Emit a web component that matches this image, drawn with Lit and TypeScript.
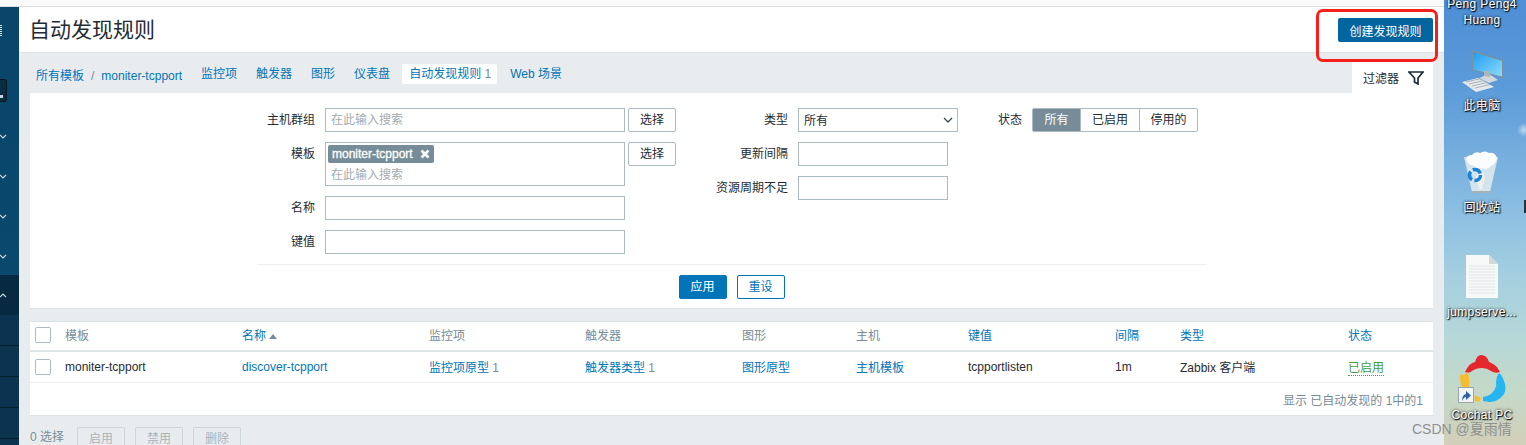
import { LitElement, css, html, svg } from 'lit';
import { customElement } from 'lit/decorators.js';

const columns = [
  { title: '模板', sort: false },
  { title: '名称', sort: true },
  { title: '监控项', sort: false },
  { title: '触发器', sort: false },
  { title: '图形', sort: false },
  { title: '主机', sort: false },
  { title: '键值', sort: true },
  { title: '间隔', sort: true },
  { title: '类型', sort: true },
  { title: '状态', sort: true },
];

const sideLines = [0, 1, 2, 3];

const chevron = (up = false) => html`<svg class="chev ${up ? 'up' : 'down'}" width="8" height="6" viewBox="0 0 8 6">
  <path d=${up ? 'M1 5l3-3 3 3' : 'M1 1l3 3 3-3'} fill="none" stroke="#c4d4de" stroke-width="1.2" />
</svg>`;

const monitorIcon = svg`<svg width="44" height="44" viewBox="0 0 44 44">
  <defs>
    <linearGradient id="scr" x1="0" y1="0" x2="1" y2="1">
      <stop offset="0" stop-color="#1e9df0" />
      <stop offset="1" stop-color="#8ddafc" />
    </linearGradient>
  </defs>
  <path d="M10 0l31 10v18L10 20z" fill="#7f909c" />
  <path d="M11 2l29 9v15.500L11 19.500z" fill="url(#scr)" />
  <path d="M17 28l10-4 9 6-9 3z" fill="#d3d8db" />
  <path d="M22 21h6v6l-6-1z" fill="#aeb7bc" />
  <path d="M0 32l16-4 16 9-18 5z" fill="#e6e9eb" />
  <path d="M4 32l15-3.500M7 34l15-3.500M10 36l15-3.500M13 38l15-3.500" stroke="#aab3b9" stroke-width="1" />
</svg>`;

const binIcon = svg`<svg width="36" height="44" viewBox="0 0 36 44">
  <path d="M1 7h34l-8 35H9z" fill="#e4ebef" fill-opacity=".85" />
  <path d="M8 41l1 2h18l1-2z" fill="#a9b0b4" />
  <path d="M3 9q1-4 6-4 3-4 8-2 5-3 9 0 6-1 8 5-2 7-6 8-4 5-9 2-5 3-8-2-6 0-8-7z" fill="#fbfcfc" />
  <path d="M17 16l5 11-3 12h-3l-3-12z" fill="#f3f6f7" fill-opacity=".7" />
  <circle cx="12" cy="25" r="5.500" fill="none" stroke="#1b83d6" stroke-width="3.500" stroke-dasharray="9 2.500" />
</svg>`;

const docIcon = svg`<svg width="32" height="43" viewBox="0 0 32 43">
  <path d="M0 0h23l9 9v34H0z" fill="#f7f8f8" />
  <path d="M23 0v9h9z" fill="#d5d8da" />
  <path d="M3 11h26M3 14h26M3 17h26M3 20h26M3 23h26M3 26h26M3 29h26M3 32h26M3 35h26M3 38h26" stroke="#e2e4e6" stroke-width="1" />
</svg>`;

const cochatIcon = svg`<svg width="48" height="50" viewBox="0 0 48 50">
  <path d="M5 18Q9 9 15 8 17 1 21 1 27 1 29 8 36 10 40 18 35 20 31 17 27 14 22 14 16 14 12 17 9 20 5 18Z" fill="#e5262b" />
  <path d="M.5 20Q4 22 7.500 18 10 24 9 34L3 36Q-1 28 .5 20Z" fill="#f5bc2d" />
  <path d="M14.300 41L21 44 19 48 15 47Z" fill="#f5bc2d" />
  <path d="M39 19Q42 21 44 27 47 34 44 40 38 48 30 48L23 47 23 43Q30 42 33 38 37 33 36 28 36 23 39 19Z" fill="#25b5f0" />
</svg>`;

@customElement('app-root')
export class AppRoot extends LitElement {
  static styles = css`
    :host {
      display: block;
      width: 1526px;
      height: 445px;
      position: relative;
      overflow: hidden;
      font-family: 'Liberation Sans', 'Noto Sans CJK SC', sans-serif;
      font-size: 12px;
      color: #1f2c33;
      background: #e9ecef;
    }
    a {
      color: #0275b8;
      text-decoration: none;
    }
    .screen {
      display: flex;
      height: 445px;
    }
    .window {
      width: 1444px;
      display: flex;
      flex-direction: column;
      flex: none;
    }
    .strip {
      height: 6px;
      background: #fafafa;
      border-bottom: 1px solid #dcdfe2;
      flex: none;
    }
    .body {
      display: flex;
      flex: 1;
      min-height: 0;
    }
    .sidebar {
      width: 19px;
      flex: none;
      display: flex;
      flex-direction: column;
      background: linear-gradient(#0a456a, #0a4a70);
      overflow: hidden;
    }
    .side-dots {
      height: 11px;
      width: 2px;
      margin-top: 18px;
      background: repeating-linear-gradient(#d8e2e8 0 1px, transparent 1px 2px);
    }
    .side-search {
      width: 7px;
      height: 23px;
      margin-top: 43px;
      padding-top: 15px;
      background: #0a2c42;
      border: 1px solid #05141e;
      border-left: 0;
      border-radius: 0 3px 3px 0;
      box-sizing: border-box;
    }
    .side-search i {
      display: block;
      width: 3px;
      height: 3px;
      background: #c9d6dd;
    }
    .side-item {
      height: 40px;
      display: flex;
      align-items: center;
    }
    .side-gap {
      height: 13px;
    }
    .side-item.open {
      background: #072a40;
    }
    .chev {
      margin-left: -1px;
    }
    .chev.down {
      margin-top: 3px;
    }
    .side-sub {
      flex: 1;
      background: #0c3350;
      display: flex;
      flex-direction: column;
    }
    .side-sub div {
      height: 30px;
      flex: none;
      border-bottom: 1px solid #05202f;
    }
    .main {
      flex: 1;
      min-width: 0;
      display: flex;
      flex-direction: column;
    }
    .header {
      height: 45px;
      flex: none;
      background: #fff;
      border-bottom: 1px solid #dde2e5;
      display: flex;
      align-items: center;
      justify-content: space-between;
      padding: 0 11px 0 10px;
    }
    .header h1 {
      margin: 0;
      font-size: 21px;
      font-weight: 400;
      line-height: 30px;
    }
    .btn-create {
      height: 24px;
      width: 95px;
      margin-top: 1px;
      border-radius: 2px;
      background: #03659f;
      color: #fff;
      display: flex;
      align-items: center;
      justify-content: center;
    }
    .content {
      padding: 0 11px;
      display: flex;
      flex-direction: column;
    }
    .nav {
      height: 40px;
      display: flex;
      align-items: flex-end;
    }
    .tabs {
      display: flex;
      align-items: center;
      height: 20px;
      margin-bottom: 9px;
      padding-left: 6px;
    }
    .crumb {
      margin-right: 12px;
      color: #768d99;
    }
    .crumb a + span {
      margin: 0 7px;
    }
    .tab {
      padding: 0 7px;
      margin-right: 5px;
      line-height: 20px;
    }
    .tab.active {
      background: #fff;
      border-radius: 2px;
      padding-right: 6px;
      margin-right: 6px;
    }
    .tab.active span,
    .count {
      color: #768d99;
    }
    .filter-tab {
      margin-left: auto;
      width: 81px;
      height: 31px;
      background: #fff;
      display: flex;
      align-items: center;
      justify-content: flex-end;
      gap: 9px;
      padding-right: 9px;
      box-sizing: border-box;
    }
    .filter {
      background: #fff;
      height: 216px;
      box-sizing: border-box;
      border-bottom: 1px solid #dde2e5;
      padding-top: 15px;
    }
    .columns {
      display: flex;
      height: 146px;
    }
    .col-a {
      width: 646px;
      flex: none;
      display: grid;
      grid-template-columns: 285px 300px 48px;
      column-gap: 10px;
      row-gap: 10px;
      grid-auto-rows: min-content;
    }
    .col-a > .pick {
      margin-left: -7px;
    }
    .col-b {
      width: 282px;
      flex: none;
      display: grid;
      grid-template-columns: 112px 160px;
      column-gap: 10px;
      row-gap: 10px;
      grid-auto-rows: min-content;
    }
    .col-c {
      flex: none;
      display: flex;
      gap: 10px;
    }
    .label {
      text-align: right;
      line-height: 24px;
      height: 24px;
    }
    .col-c .label {
      width: 64px;
    }
    .input {
      height: 24px;
      box-sizing: border-box;
      border: 1px solid #acbbc2;
      background: #fff;
      padding: 0 5px;
      line-height: 22px;
    }
    .short {
      width: 150px;
    }
    .ph {
      color: #a3abb0;
    }
    .multi {
      height: 44px;
      padding: 2px 2px 0;
      line-height: 14px;
    }
    .multi .ph {
      display: block;
      padding: 5px 3px 0;
    }
    .tag {
      display: inline-flex;
      align-items: center;
      gap: 7px;
      height: 18px;
      padding: 0 4px;
      background: #768d99;
      border-radius: 2px;
      color: #fff;
      -webkit-text-stroke: 0.3px #fff;
    }
    .pick {
      height: 24px;
      width: 48px;
      box-sizing: border-box;
      border: 1px solid #acbbc2;
      border-radius: 2px;
      background: #fff;
      text-align: center;
      line-height: 22px;
    }
    .select {
      display: flex;
      align-items: center;
      justify-content: space-between;
      padding-right: 4px;
      padding-top: 1px;
    }
    .seg {
      display: flex;
      height: 24px;
      box-sizing: border-box;
      border: 1px solid #acbbc2;
      border-radius: 2px;
      background: #fff;
      line-height: 22px;
      text-align: center;
    }
    .seg span {
      width: 58px;
      border-left: 1px solid #acbbc2;
    }
    .seg span:first-child {
      width: 47px;
      border-left: 0;
      background: #768d99;
      color: #fff;
    }
    .seg span:last-child {
      width: 57px;
    }
    .divider {
      height: 1px;
      width: 950px;
      margin: 10px 0 0 227px;
      background: #ebeef0;
    }
    .actions {
      display: flex;
      justify-content: center;
      gap: 10px;
      margin-top: 10px;
    }
    .actions span {
      width: 48px;
      height: 24px;
      box-sizing: border-box;
      border: 1px solid #0275b8;
      border-radius: 2px;
      text-align: center;
      line-height: 22px;
      color: #0275b8;
    }
    .actions .primary {
      background: #0275b8;
      color: #fff;
    }
    .list {
      margin-top: 12px;
      background: #fff;
      height: 95px;
      box-sizing: border-box;
      border-bottom: 1px solid #dde2e5;
      border-top: 1px solid #dde2e5;
    }
    .row {
      display: grid;
      grid-template-columns: 35px 177px 187px 156px 157px 114px 112px 147px 65px 168px 85px;
      align-items: center;
    }
    .row.head {
      height: 25px;
      padding-bottom: 3px;
      border-bottom: 2px solid #dde2e5;
      color: #768d99;
    }
    .row.item {
      height: 29px;
      padding-bottom: 1px;
      border-bottom: 1px solid #ebeef0;
    }
    .check {
      width: 16px;
      height: 16px;
      margin-left: 5px;
      box-sizing: border-box;
      border: 1px solid #acbbc2;
      border-radius: 2px;
      background: #fff;
    }
    .sort-arrow {
      display: inline-block;
      margin-left: 3px;
      vertical-align: 1px;
      border-left: 4px solid transparent;
      border-right: 4px solid transparent;
      border-bottom: 5px solid #768d99;
    }
    .status {
      color: #429e47;
      border-bottom: 1px dotted #429e47;
    }
    .paging {
      text-align: right;
      color: #768d99;
      padding: 8px 10px 0 0;
    }
    .paging a {
      color: #768d99;
    }
    .bulk {
      display: flex;
      margin-top: 11px;
      color: #768d99;
    }
    .bulk b {
      font-weight: 400;
      line-height: 20px;
      margin-right: 13px;
    }
    .bulk span {
      width: 48px;
      height: 24px;
      box-sizing: border-box;
      margin-right: 10px;
      border: 1px solid #cfd6da;
      border-radius: 2px;
      background: #e9ecef;
      color: #aab4ba;
      text-align: center;
      line-height: 22px;
    }
    .desktop {
      flex: 1;
      position: relative;
      overflow: hidden;
      background: radial-gradient(circle at 80px 130px, rgba(255, 255, 255, 0.55), transparent 7px),
        linear-gradient(#4d8ed5 0%, #5c9bd9 20%, #8cbfe2 48%, #a5cfe0 62%, #b5d8d8 76%, #c4d9c8 88%, #d2cfb9 100%);
    }
    .shortcut {
      position: absolute;
      left: 0;
      width: 76px;
      display: flex;
      flex-direction: column;
      align-items: center;
      color: #fff;
      text-shadow: 0 0 3px #000, 1px 1px 1px #000;
      line-height: 16px;
      letter-spacing: 0.35px;
      white-space: nowrap;
    }
    .shortcut svg {
      display: block;
    }
    .s-user {
      top: -4px;
    }
    .s-pc {
      top: 50px;
    }
    .s-pc svg,
    .s-chat > svg {
      margin-left: 4px;
    }
    .s-bin {
      top: 150px;
    }
    .s-bin svg {
      margin-left: -2px;
    }
    .s-doc {
      top: 255px;
    }
    .s-chat {
      top: 354px;
    }
    .cap {
      margin-top: 4px;
    }
    .s-bin .cap,
    .s-doc .cap {
      margin-top: 6px;
    }
    .s-chat .cap {
      margin-top: 3px;
    }
    .arrow-box {
      position: absolute;
      left: 14px;
      top: 33px;
      width: 16px;
      height: 16px;
      box-sizing: border-box;
      background: #f2f4f6;
      border: 1px solid #9aa5ad;
    }
    .edge-label {
      position: absolute;
      right: 0;
      top: 200px;
      width: 2px;
      height: 13px;
      background: #27343d;
    }
    .red-box {
      position: absolute;
      left: 1316px;
      top: 9px;
      width: 122px;
      height: 53px;
      box-sizing: border-box;
      border: 3px solid #f5201a;
      border-radius: 7px;
    }
    .mark {
      position: absolute;
      left: 1412px;
      top: 420px;
      font-size: 14px;
      line-height: 18px;
      color: #8f9090;
      white-space: nowrap;
    }
  `;

  render() {
    return html`
      <div class="screen">
        <div class="window">
          <div class="strip"></div>
          <div class="body">
            <aside class="sidebar">
              <div class="side-dots"></div>
              <div class="side-search"><i></i></div>
              <div class="side-gap"></div>
              <div class="side-item">${chevron()}</div>
              <div class="side-item">${chevron()}</div>
              <div class="side-item">${chevron()}</div>
              <div class="side-item">${chevron()}</div>
              <div class="side-item open">${chevron(true)}</div>
              <div class="side-sub">${sideLines.map(() => html`<div></div>`)}</div>
            </aside>
            <main class="main">
              <header class="header">
                <h1>自动发现规则</h1>
                <a class="btn-create">创建发现规则</a>
              </header>
              <div class="content">
                ${this.renderNav()} ${this.renderFilter()} ${this.renderList()}
                <div class="bulk">
                  <b>0 选择</b>
                  <span>启用</span><span>禁用</span><span>删除</span>
                </div>
              </div>
            </main>
          </div>
        </div>
        ${this.renderDesktop()}
      </div>
      <div class="red-box"></div>
      <div class="mark">CSDN @夏雨情</div>
    `;
  }

  renderNav() {
    return html`<nav class="nav">
      <div class="tabs">
        <div class="crumb"><a>所有模板</a><span>/</span><a>moniter-tcpport</a></div>
        <a class="tab">监控项</a>
        <a class="tab">触发器</a>
        <a class="tab">图形</a>
        <a class="tab">仪表盘</a>
        <a class="tab active">自动发现规则 <span>1</span></a>
        <a class="tab">Web 场景</a>
      </div>
      <div class="filter-tab">
        过滤器
        <svg width="16" height="14" viewBox="0 0 16 14">
          <path d="M1 1h14L10 7v6L6.500 11V7z" fill="none" stroke="#1f2c33" stroke-width="1.700" />
        </svg>
      </div>
    </nav>`;
  }

  renderFilter() {
    return html`<section class="filter">
      <div class="columns">
        <div class="col-a">
          <div class="label">主机群组</div>
          <div class="input"><span class="ph">在此输入搜索</span></div>
          <div class="pick">选择</div>
          <div class="label">模板</div>
          <div class="input multi">
            <span class="tag">
              moniter-tcpport
              <svg width="10" height="10" viewBox="0 0 10 10">
                <path d="M1.500 1.500l7 7M8.500 1.500l-7 7" stroke="#fff" stroke-width="2.600" />
              </svg>
            </span>
            <span class="ph">在此输入搜索</span>
          </div>
          <div class="pick">选择</div>
          <div class="label">名称</div>
          <div class="input"></div>
          <div></div>
          <div class="label">键值</div>
          <div class="input"></div>
          <div></div>
        </div>
        <div class="col-b">
          <div class="label">类型</div>
          <div class="input select">
            所有
            <svg width="10" height="7" viewBox="0 0 10 7">
              <path d="M1 1l4 4 4-4" fill="none" stroke="#3b4a52" stroke-width="1.300" />
            </svg>
          </div>
          <div class="label">更新间隔</div>
          <div class="input short"></div>
          <div class="label">资源周期不足</div>
          <div class="input short"></div>
        </div>
        <div class="col-c">
          <div class="label">状态</div>
          <div class="seg"><span>所有</span><span>已启用</span><span>停用的</span></div>
        </div>
      </div>
      <div class="divider"></div>
      <div class="actions">
        <span class="primary">应用</span>
        <span>重设</span>
      </div>
    </section>`;
  }

  renderList() {
    return html`<section class="list">
      <div class="row head">
        <div class="check"></div>
        ${columns.map(
          (c) => html`<div>
            ${c.sort ? html`<a>${c.title}</a>` : c.title}${c.title === '名称'
              ? html`<i class="sort-arrow"></i>`
              : ''}
          </div>`,
        )}
      </div>
      <div class="row item">
        <div class="check"></div>
        <div>moniter-tcpport</div>
        <div><a>discover-tcpport</a></div>
        <div><a>监控项原型</a> <span class="count">1</span></div>
        <div><a>触发器类型</a> <span class="count">1</span></div>
        <div><a>图形原型</a></div>
        <div><a>主机模板</a></div>
        <div>tcpportlisten</div>
        <div>1m</div>
        <div>Zabbix 客户端</div>
        <div><a class="status">已启用</a></div>
      </div>
      <div class="paging">显示 已自动发现的 <a>1</a>中的1</div>
    </section>`;
  }

  renderDesktop() {
    return html`<div class="desktop">
      <div class="shortcut s-user"><span>Peng Peng4</span><span>Huang</span></div>
      <div class="shortcut s-pc">${monitorIcon}<span class="cap">此电脑</span></div>
      <div class="shortcut s-bin">${binIcon}<span class="cap">回收站</span></div>
      <div class="shortcut s-doc">${docIcon}<span class="cap">jumpserve...</span></div>
      <div class="shortcut s-chat">
        ${cochatIcon}
        <div class="arrow-box">
          <svg width="14" height="14" viewBox="0 0 14 14">
            <path d="M3 13q0-6 4-7V3l5 4.500L7 12V9q-2 0-4 4z" fill="#2a62b0" />
          </svg>
        </div>
        <span class="cap">Cochat PC</span>
      </div>
      <div class="edge-label"></div>
    </div>`;
  }
}

declare global {
  interface HTMLElementTagNameMap {
    'app-root': AppRoot;
  }
}
